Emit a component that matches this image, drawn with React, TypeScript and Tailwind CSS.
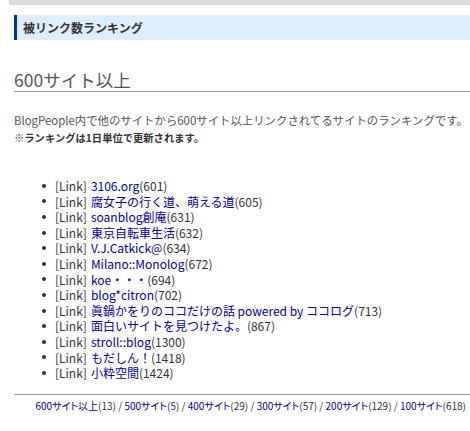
const items = [
  { name: "3106.org", count: 601 },
  { name: "腐女子の行く道、萌える道", count: 605 },
  { name: "soanblog創庵", count: 631 },
  { name: "東京自転車生活", count: 632 },
  { name: "V.J.Catkick@", count: 634 },
  { name: "Milano::Monolog", count: 672 },
  { name: "koe・・・", count: 694 },
  { name: "blog*citron", count: 702 },
  { name: "眞鍋かをりのココだけの話 powered by ココログ", count: 713 },
  { name: "面白いサイトを見つけたよ。", count: 867 },
  { name: "stroll::blog", count: 1300 },
  { name: "もだしん！", count: 1418 },
  { name: "小粋空間", count: 1424 },
];

const pages = [
  { label: "600サイト以上", count: 13 },
  { label: "500サイト", count: 5 },
  { label: "400サイト", count: 29 },
  { label: "300サイト", count: 57 },
  { label: "200サイト", count: 129 },
  { label: "100サイト", count: 618 },
];

export default function App() {
  return (
    <div className="w-[470px] h-[431px] overflow-hidden bg-white font-['Noto_Sans_CJK_JP',sans-serif] text-[#333]">
      <div className="ml-[9px] h-[5px] bg-[#dddddd]" />
      <div className="ml-[14px] mt-[10px]">
        <h2 className="h-[25px] border-l-[3px] border-[#0033aa] bg-[#ddeeff] pl-[6px] text-[12px] font-bold leading-[25px] text-[#333]">
          被リンク数ランキング
        </h2>
        <h3 className="mt-[29px] border-b border-[#999] text-[17.5px] leading-[22px] text-[#555]">600サイト以上</h3>
        <p className="mt-[20px] whitespace-nowrap text-[11.4px] leading-[17px] text-[#555]">
          BlogPeople内で他のサイトから600サイト以上リンクされてるサイトのランキングです。
        </p>
        <p className="whitespace-nowrap text-[10.3px] font-bold leading-[17px] text-[#333]">※ランキングは1日単位で更新されます。</p>
        <ul className="mt-[32px] pl-[28px]">
          {items.map((it) => (
            <li key={it.name} className="flex h-[15.6px] items-center whitespace-nowrap text-[12px] leading-[15.6px]">
              <span className="mr-[9px] h-[4px] w-[4px] rounded-full bg-[#333]" />
              <a className="text-[#333]">[Link]</a>
              <a className="ml-[4px] text-[#0000aa]">{it.name}</a>
              <span className="text-[#333]">({it.count})</span>
            </li>
          ))}
        </ul>
        <div className="mt-[13px] border-t border-[#999] pr-[4px] pt-[4px] text-right text-[10px] leading-[14px] whitespace-nowrap [font-feature-settings:'palt']">
          {pages.map((p, i) => (
            <span key={p.label}>
              {i > 0 && <span className="text-[#333]"> / </span>}
              <a className="text-[#000099]">{p.label}</a>
              <span className="text-[#333]">({p.count})</span>
            </span>
          ))}
        </div>
      </div>
    </div>
  );
}
